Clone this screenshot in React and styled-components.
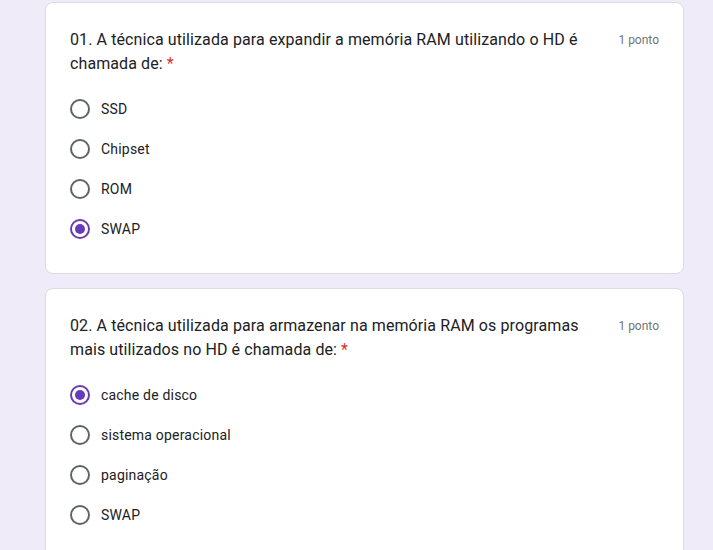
import styled, { createGlobalStyle } from "styled-components";

const GlobalStyle = createGlobalStyle`
    html, body {
        margin: 0;
        padding: 0;
        background: #f0ebf8;
    }
`;

const questions = [
    {
        id: 1,
        title: "01. A técnica utilizada para expandir a memória RAM utilizando o HD é chamada de:",
        options: ["SSD", "Chipset", "ROM", "SWAP"],
        checked: 3,
    },
    {
        id: 2,
        title: "02. A técnica utilizada para armazenar na memória RAM os programas mais utilizados no HD é chamada de:",
        options: ["cache de disco", "sistema operacional", "paginação", "SWAP"],
        checked: 0,
    },
];

export default function App() {
    return (
        <>
            <GlobalStyle />
            <Page>
                {questions.map((q) => (
                    <Card key={q.id}>
                        <Header>
                            <Title>
                                {q.title}
                                <Required>*</Required>
                            </Title>
                            <Points>1 ponto</Points>
                        </Header>
                        <Options>
                            {q.options.map((opt, i) => (
                                <Option key={opt}>
                                    <Radio $checked={i === q.checked} />
                                    <Label>{opt}</Label>
                                </Option>
                            ))}
                        </Options>
                    </Card>
                ))}
            </Page>
        </>
    );
}

const Page = styled.main`
    display: flex;
    flex-direction: column;
    gap: 14px;
    padding: 2px 0 24px 45px;
`;

const Card = styled.section`
    box-sizing: border-box;
    width: 639px;
    background: #fff;
    border: 1px solid #dadce0;
    border-radius: 8px;
    padding: 24px;
`;

const Header = styled.div`
    display: flex;
    align-items: flex-start;
    justify-content: space-between;
    padding-top: 1px;
`;

const Title = styled.div`
    width: 520px;
    font-family: Roboto, "Noto Sans", sans-serif;
    font-size: 16px;
    line-height: 24px;
    letter-spacing: 0.1px;
    color: #202124;
`;

const Required = styled.span`
    margin-left: 4px;
    color: #d93025;
`;

const Points = styled.div`
    font-family: Roboto, sans-serif;
    font-size: 12px;
    line-height: 24px;
    color: #70757a;
    white-space: nowrap;
`;

const Options = styled.div`
    display: flex;
    flex-direction: column;
    margin-top: 13px;
`;

const Option = styled.div`
    display: flex;
    align-items: center;
    height: 40px;
    gap: 11px;
`;

const Radio = styled.span`
    box-sizing: border-box;
    width: 20px;
    height: 20px;
    border-radius: 50%;
    border: 2px solid ${(p) => (p.$checked ? "#673ab7" : "#5f6368")};
    display: flex;
    align-items: center;
    justify-content: center;

    &::after {
        content: "";
        display: ${(p) => (p.$checked ? "block" : "none")};
        width: 10px;
        height: 10px;
        border-radius: 50%;
        background: #673ab7;
    }
`;

const Label = styled.span`
    font-family: Roboto, sans-serif;
    font-size: 14px;
    letter-spacing: 0.2px;
    color: #202124;
`;
